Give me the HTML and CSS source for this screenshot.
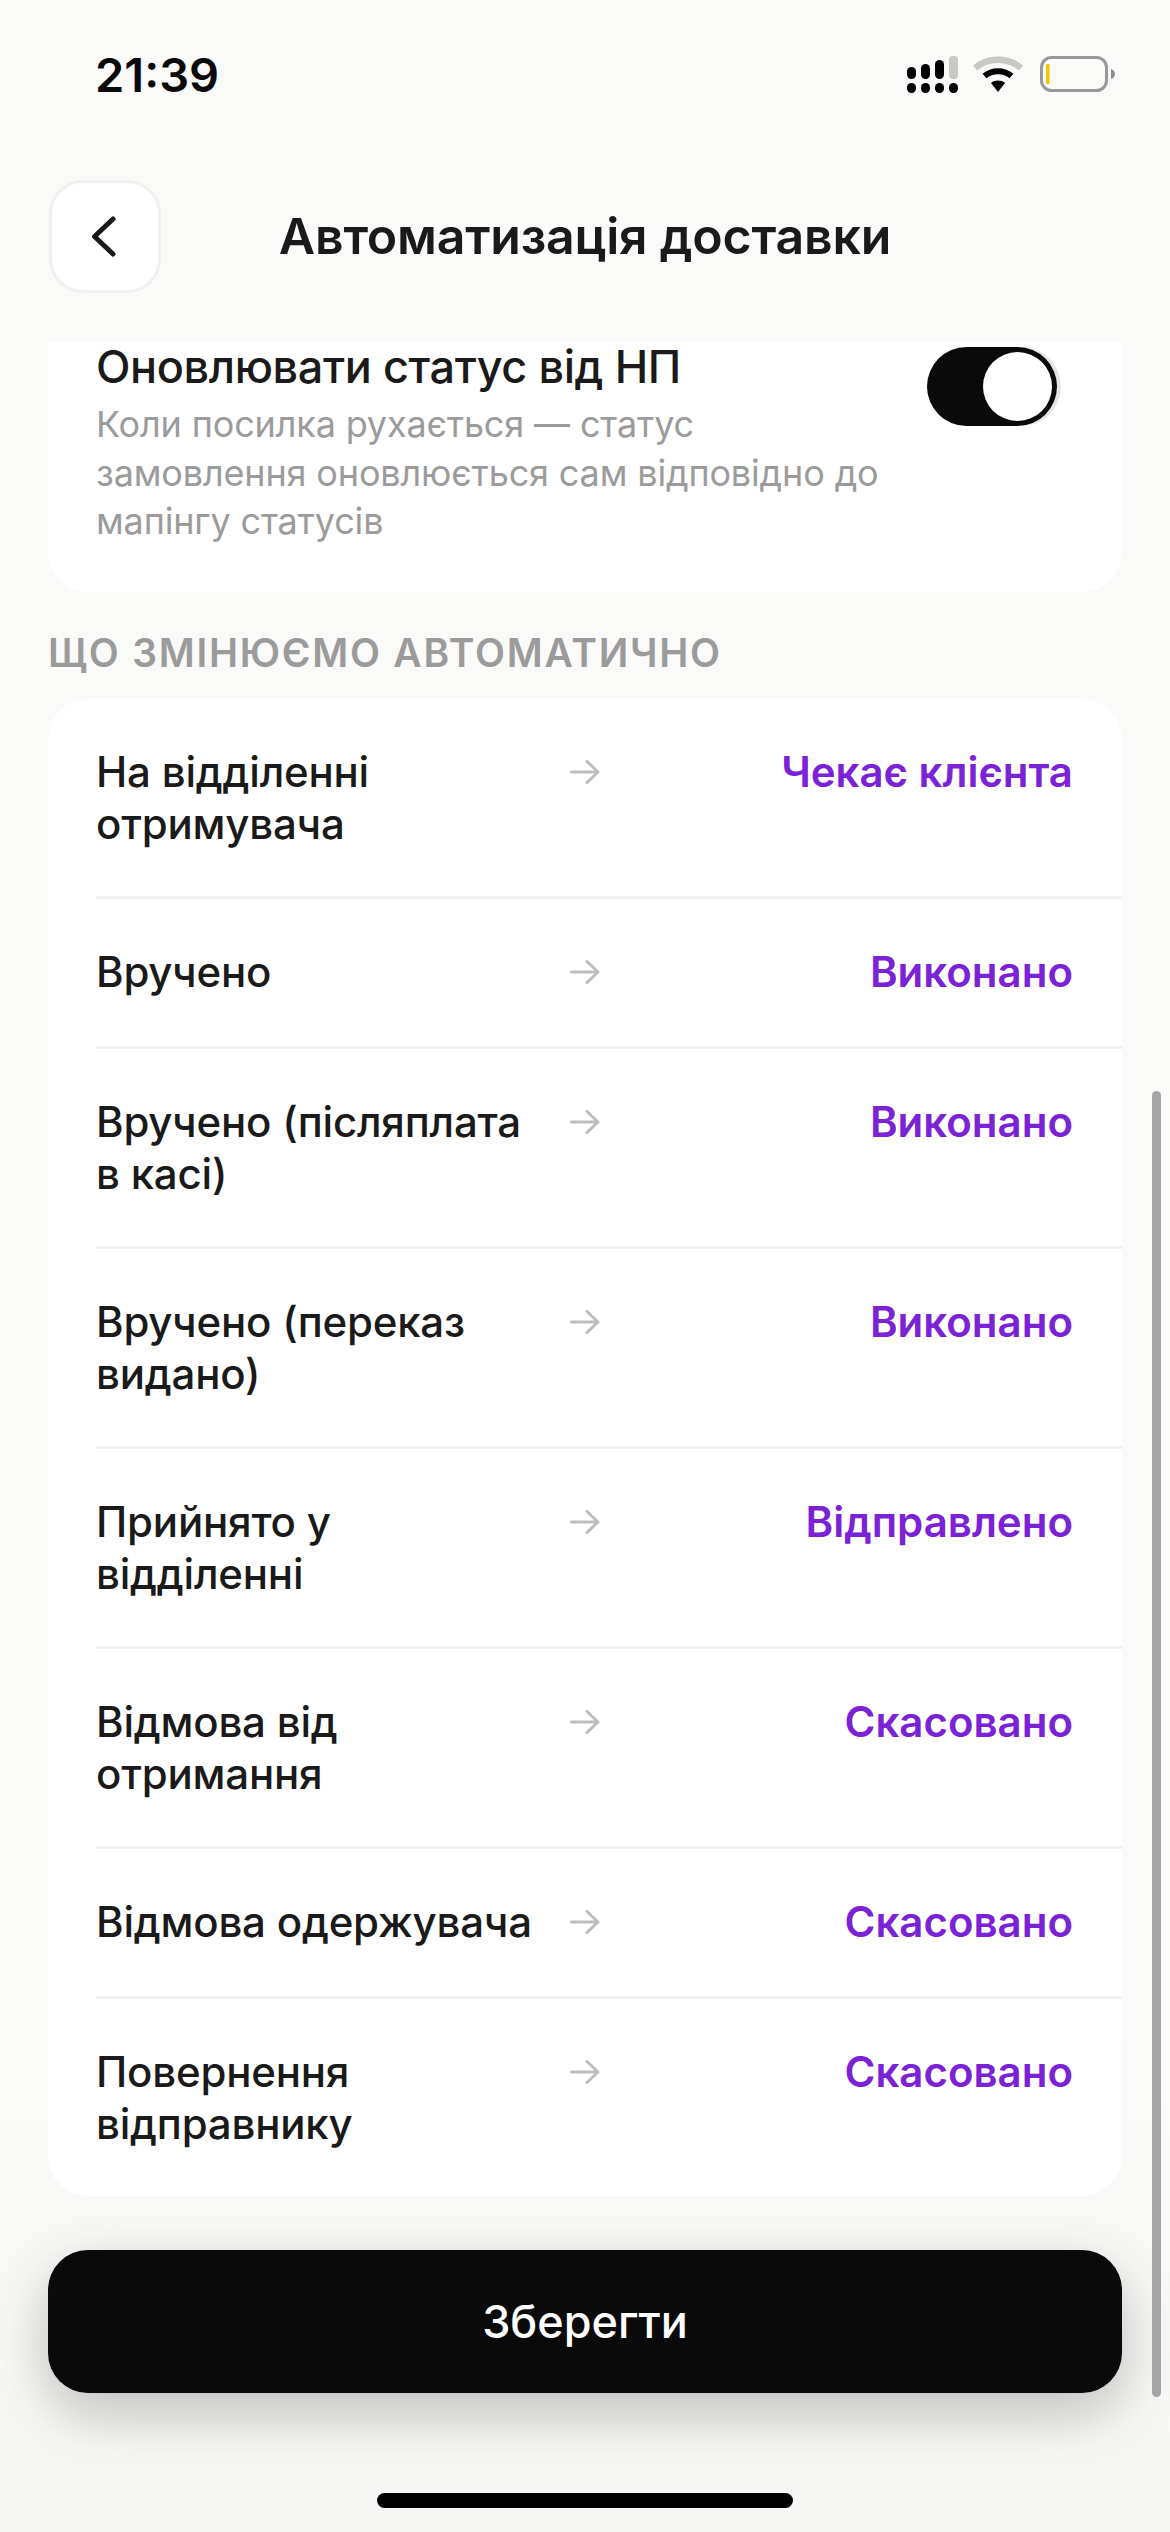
FILE: index.html
```html
<!DOCTYPE html>
<html lang="uk">
<head>
<meta charset="utf-8">
<title>Автоматизація доставки</title>
<link rel="stylesheet" href="styles.css">
</head>
<body>
<div class="app">
  <div class="status">
    <span class="time">21:39</span>
    <div class="status-icons">
      <svg class="ic-signal" width="51" height="37" viewBox="0 0 51 37">
        <g fill="#000">
          <rect x="0" y="11" width="9" height="12" rx="4.5"/><rect x="14" y="8" width="9" height="15" rx="4.5"/><rect x="28" y="4" width="9" height="19" rx="4.5"/>
          <rect x="0" y="27" width="9" height="10" rx="4.5"/><rect x="14" y="27" width="9" height="10" rx="4.5"/><rect x="28" y="27" width="9" height="10" rx="4.5"/><rect x="42" y="27" width="9" height="10" rx="4.5"/>
        </g>
        <rect x="42" y="0" width="9" height="23" rx="4" fill="#c8c8c6"/>
      </svg>
      <svg class="ic-wifi" width="50" height="37" viewBox="0 0 50 37">
        <path d="M2 13 C15 2 35 2 48 13" fill="none" stroke="#c8c8c6" stroke-width="6.5"/>
        <path d="M11.5 21 C19 14.5 31 14.5 38.5 21" fill="none" stroke="#000" stroke-width="6"/>
        <path d="M18 28 C22 24.8 28 24.8 32 28 L25 37 Z" fill="#000"/>
      </svg>
      <svg class="ic-batt" width="75" height="36" viewBox="0 0 75 36">
        <rect x="1.5" y="1.5" width="65" height="33" rx="10" fill="none" stroke="#999" stroke-width="3"/>
        <rect x="6" y="8" width="3.5" height="20" fill="#f5c400"/>
        <path d="M71 13 C74 14 75 16 75 18 C75 20 74 22 71 23 Z" fill="#8e8e8e"/>
      </svg>
    </div>
  </div>

  <header class="header">
    <button class="back">
      <svg width="30" height="47" viewBox="0 0 30 47"><path d="M25 6 L6.500 23.500 L25 41" fill="none" stroke="#1a1a1a" stroke-width="5" stroke-linecap="round" stroke-linejoin="round"/></svg>
    </button>
    <h1 class="title">Автоматизація доставки</h1>
    <span class="spacer"></span>
  </header>

  <main class="content">
    <section class="card card-top">
      <div class="toggle-text">
        <div class="toggle-title">Оновлювати статус від НП</div>
        <p class="toggle-desc">Коли посилка рухається — статус замовлення оновлюється сам відповідно до мапінгу статусів</p>
      </div>
      <div class="switch"><span class="knob"></span></div>
    </section>

    <h2 class="section-label">ЩО ЗМІНЮЄМО АВТОМАТИЧНО</h2>

    <section class="card card-list">
      <div class="row"><span class="from">На відділенні отримувача</span><svg class="arrow" width="30" height="24" viewBox="0 0 30 24"><path d="M1.500 12H28M17 1.500 28 12 17 22.500" fill="none" stroke="#bdbdbd" stroke-width="3" stroke-linecap="round" stroke-linejoin="round"/></svg><span class="to">Чекає клієнта</span></div>
      <div class="row"><span class="from">Вручено</span><svg class="arrow" width="30" height="24" viewBox="0 0 30 24"><path d="M1.500 12H28M17 1.500 28 12 17 22.500" fill="none" stroke="#bdbdbd" stroke-width="3" stroke-linecap="round" stroke-linejoin="round"/></svg><span class="to">Виконано</span></div>
      <div class="row"><span class="from">Вручено (післяплата в касі)</span><svg class="arrow" width="30" height="24" viewBox="0 0 30 24"><path d="M1.500 12H28M17 1.500 28 12 17 22.500" fill="none" stroke="#bdbdbd" stroke-width="3" stroke-linecap="round" stroke-linejoin="round"/></svg><span class="to">Виконано</span></div>
      <div class="row"><span class="from">Вручено (переказ видано)</span><svg class="arrow" width="30" height="24" viewBox="0 0 30 24"><path d="M1.500 12H28M17 1.500 28 12 17 22.500" fill="none" stroke="#bdbdbd" stroke-width="3" stroke-linecap="round" stroke-linejoin="round"/></svg><span class="to">Виконано</span></div>
      <div class="row"><span class="from">Прийнято у відділенні</span><svg class="arrow" width="30" height="24" viewBox="0 0 30 24"><path d="M1.500 12H28M17 1.500 28 12 17 22.500" fill="none" stroke="#bdbdbd" stroke-width="3" stroke-linecap="round" stroke-linejoin="round"/></svg><span class="to">Відправлено</span></div>
      <div class="row"><span class="from">Відмова від отримання</span><svg class="arrow" width="30" height="24" viewBox="0 0 30 24"><path d="M1.500 12H28M17 1.500 28 12 17 22.500" fill="none" stroke="#bdbdbd" stroke-width="3" stroke-linecap="round" stroke-linejoin="round"/></svg><span class="to">Скасовано</span></div>
      <div class="row"><span class="from">Відмова одержувача</span><svg class="arrow" width="30" height="24" viewBox="0 0 30 24"><path d="M1.500 12H28M17 1.500 28 12 17 22.500" fill="none" stroke="#bdbdbd" stroke-width="3" stroke-linecap="round" stroke-linejoin="round"/></svg><span class="to">Скасовано</span></div>
      <div class="row row-last"><span class="from">Повернення відправнику</span><svg class="arrow" width="30" height="24" viewBox="0 0 30 24"><path d="M1.500 12H28M17 1.500 28 12 17 22.500" fill="none" stroke="#bdbdbd" stroke-width="3" stroke-linecap="round" stroke-linejoin="round"/></svg><span class="to">Скасовано</span></div>
    </section>

    <button class="save">Зберегти</button>
  </main>

  <div class="scrollbar"></div>
  <div class="home"></div>
</div>
</body>
</html>
```
FILE: styles.css
```css
* { box-sizing: border-box; }
html, body { margin: 0; padding: 0; }
body {
  width: 1170px;
  height: 2532px;
  overflow: hidden;
  background: #fafaf8;
  font-family: Inter, "Noto Sans", sans-serif;
  color: #1a1a1a;
}
.app {
  position: relative;
  width: 1170px;
  height: 2532px;
  background: linear-gradient(#fafaf8 0, #fafaf8 80%, #f7f7f5 100%);
}
.status {
  height: 180px;
  padding: 56px 55px 0 95px;
  display: flex;
  justify-content: space-between;
  align-items: flex-start;
}
.time {
  font-size: 47px;
  font-weight: 600;
  line-height: 37px;
  color: #0a0a0a;
}
.status-icons {
  display: flex;
  align-items: flex-start;
  gap: 17px;
}
.ic-signal { margin-right: -2px; }
.ic-wifi { margin-top: -1px; }
.header {
  height: 162px;
  padding: 0 49px;
  display: flex;
  align-items: flex-start;
}
.back {
  width: 112px;
  height: 113px;
  flex: none;
  padding: 0;
  background: #fff;
  border: 3px solid #f1f1f0;
  border-radius: 34px;
  display: flex;
  align-items: center;
  justify-content: center;
}
.back svg { margin-right: 4px; margin-top: -1px; }
.title {
  flex: 1;
  margin: 0;
  text-align: center;
  font-size: 50px;
  font-weight: 600;
  letter-spacing: -0.200px;
  line-height: 113px;
  color: #1a1a1a;
}
.spacer { width: 112px; flex: none; }
.content { padding: 0 48px; }
.card { background: #fff; }
.card-top {
  height: 250px;
  border-radius: 0 0 40px 40px;
  padding: 0 48px;
  display: flex;
  justify-content: space-between;
  align-items: flex-start;
}
.toggle-text { width: 800px; }
.toggle-title {
  font-size: 45px;
  font-weight: 500;
  letter-spacing: -0.400px;
  line-height: 50px;
  color: #1a1a1a;
}
.toggle-desc {
  margin: 8px 0 0;
  font-size: 36px;
  letter-spacing: -0.150px;
  line-height: 48.500px;
  color: #9b9b9b;
}
.switch {
  width: 130px;
  height: 79px;
  margin: 5px 17px 0 0;
  padding: 5px;
  flex: none;
  display: flex;
  justify-content: flex-end;
  background: #0a0a0a;
  border-radius: 40px;
  box-shadow: 4px 0 0 #e4e4ea;
}
.knob {
  width: 69px;
  height: 69px;
  background: #fff;
  border-radius: 50%;
}
.section-label {
  margin: 0;
  height: 107px;
  padding-top: 37px;
  font-size: 39px;
  font-weight: 600;
  line-height: 47px;
  letter-spacing: 1.750px;
  color: #9b9b9b;
}
.card-list {
  border-radius: 40px;
  padding-left: 48px;
}
.row {
  min-height: 150px;
  display: flex;
  align-items: flex-start;
  padding: 47px 49px 46px 0;
  border-bottom: 3px solid #f1f1f0;
}
.row-last { border-bottom: 0; }
.from {
  width: 440px;
  flex: none;
  font-size: 42px;
  font-weight: 500;
  letter-spacing: -0.200px;
  line-height: 52px;
  color: #1a1a1a;
}
.arrow {
  flex: none;
  margin: 14px 0 0 34px;
}
.to {
  flex: 1;
  text-align: right;
  font-size: 42px;
  font-weight: 600;
  line-height: 52px;
  color: #7b22d6;
}
.save {
  display: block;
  width: 100%;
  height: 143px;
  margin-top: 54px;
  padding: 0;
  border: 0;
  border-radius: 40px;
  background: #0a0a0a;
  color: #fff;
  font-family: inherit;
  font-size: 45px;
  font-weight: 500;
  box-shadow: 0 20px 60px rgba(0, 0, 0, 0.24);
}
.scrollbar {
  position: absolute;
  left: 1152px;
  top: 1091px;
  width: 9px;
  height: 1306px;
  border-radius: 5px;
  background: #a5a5a5;
}
.home {
  position: absolute;
  left: 377px;
  top: 2493px;
  width: 416px;
  height: 15px;
  border-radius: 8px;
  background: #000;
}
```
